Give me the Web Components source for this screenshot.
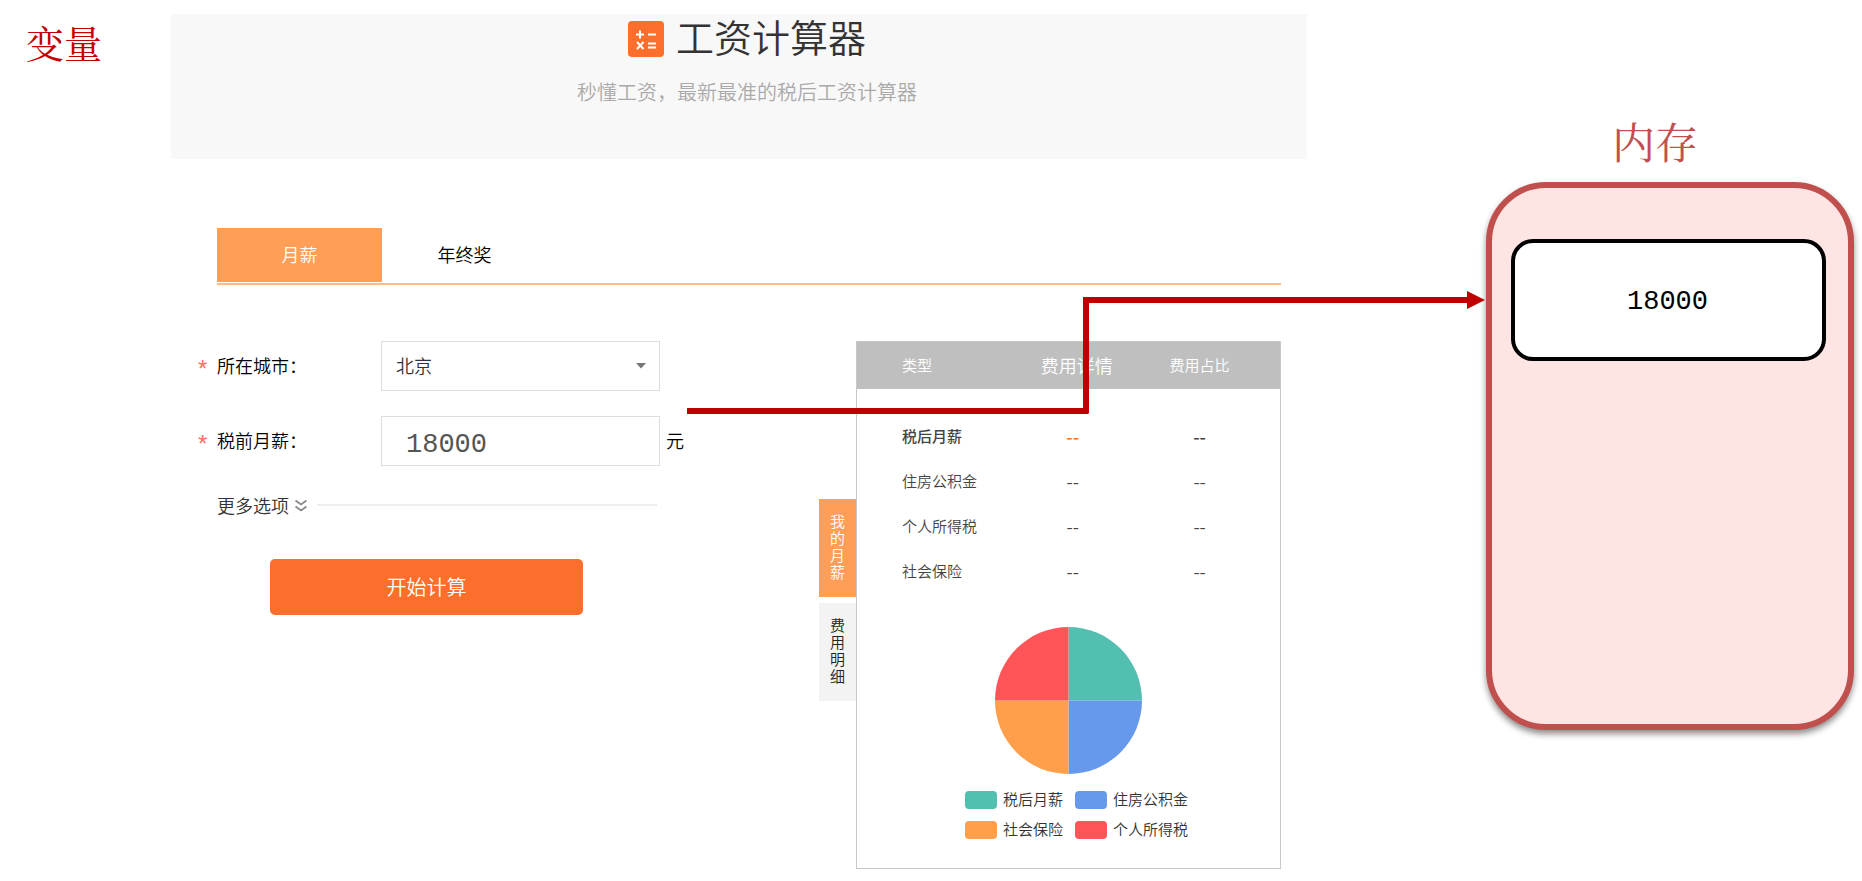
<!DOCTYPE html>
<html lang="zh-CN">
<head>
<meta charset="utf-8">
<title>变量 - 工资计算器</title>
<style>
body { margin: 0; background: #fff; color: #1a1a1a; font: 350 18px/24px "Noto Sans CJK SC", sans-serif; }
</style>
</head>
<body>
<lesson-slide>
  <slide-title slot="title">变量</slide-title>
  <salary-calculator slot="main"></salary-calculator>
  <memory-box slot="side" label="内存" value="18000"></memory-box>
  <flow-arrow slot="arrow"></flow-arrow>
</lesson-slide>

<script>
function define(name, html, setup) {
  const template = document.createElement('template');
  template.innerHTML = html;
  customElements.define(name, class extends HTMLElement {
    constructor() {
      super();
      this.attachShadow({ mode: 'open' }).append(template.content.cloneNode(true));
    }
    connectedCallback() {
      if (setup) setup(this, this.shadowRoot);
    }
  });
}

define('slide-title', `
<style>
:host { display: block; }
h1 { margin: 0; color: #c00000; font: 400 38px/48px "Noto Serif CJK SC", "Noto Sans CJK SC", serif; }
</style>
<h1><slot></slot></h1>`);

define('flow-arrow', `
<style>
:host { display: grid; grid-template-columns: 402fr 396fr; height: 117px; color: #c00000; pointer-events: none; }
.start { border: solid; border-width: 0 6px 6px 0; border-radius: 0 0 2px 0; }
.end { position: relative; border-top: 6px solid; margin: 0 16px 0 -6px; border-radius: 2px 0 0 0; }
svg { position: absolute; right: -16px; top: -12px; fill: currentColor; }
</style>
<div class="start"></div>
<div class="end"><svg width="18" height="18" viewBox="0 0 18 18"><path d="M0 0L18 9L0 18Z"/></svg></div>`);

define('memory-box', `
<style>
:host { display: block; }
h2 { margin: 0 0 14px; padding-right: 30px; text-align: center; color: #c0504d; font: 400 43px/54px "Noto Serif CJK SC", "Noto Sans CJK SC", serif; }
.memory { box-sizing: border-box; min-height: 548px; padding: 51px 22px 51px 19px; border: 6px solid #c0504d; border-radius: 60px; background: #ffe4e4; box-shadow: 0 4px 6px rgba(0,0,0,.45); }
.cell { display: flex; align-items: center; justify-content: center; box-sizing: border-box; height: 122px; padding: 4px 2px 0 0; border: 4px solid #000; border-radius: 22px; background: #fff; color: #000; font: 400 27px/32px "Liberation Mono", monospace; }
</style>
<h2></h2>
<div class="memory"><div class="cell"></div></div>`, (host, root) => {
  root.querySelector('h2').textContent = host.getAttribute('label');
  root.querySelector('.cell').textContent = host.getAttribute('value');
});

define('calc-header', `
<style>
:host { display: block; box-sizing: border-box; height: 145px; padding-left: 16px; background: #f8f8f8; text-align: center; }
.brand { display: flex; justify-content: center; align-items: center; gap: 12px; height: 50px; }
h2 { margin: 0; padding-bottom: 6px; color: #333; font-size: 38px; line-height: 44px; font-weight: 350; }
p { margin: 14px 0 0; color: #aaa; font-size: 20px; line-height: 28px; }
</style>
<div class="brand">
  <svg width="36" height="36" viewBox="0 0 36 36"><rect width="36" height="36" rx="4" fill="#fc6e2b"/><g fill="none" stroke="#fff" stroke-width="2"><path d="M8 13.500h8M12 9.500v8M20 13.500h8M20 22.500h8M20 26.500h8M9 21l6.500 7M15.500 21l-6.500 7"/></g></svg>
  <h2>工资计算器</h2>
</div>
<p>秒懂工资，最新最准的税后工资计算器</p>`);

define('calc-tabs', `
<style>
:host { display: block; border-bottom: 2px solid #ffb888; }
div { display: flex; padding-bottom: 1px; }
button { width: 165px; height: 54px; padding: 0 0 2px; border: 0; background: none; color: #000; font: inherit; }
button[aria-selected=true] { background: #ff9e57; color: #fff; }
</style>
<div role="tablist"><button role="tab" aria-selected="true">月薪</button><button role="tab" aria-selected="false">年终奖</button></div>`);

define('calc-form', `
<style>
:host { display: block; width: 493px; }
form { margin: 0; }
.row { display: flex; align-items: center; height: 50px; margin-bottom: 25px; color: #000; }
.mark { width: 19px; color: #f87060; font: 400 24px/24px "Liberation Sans", sans-serif; padding-top: 6px; box-sizing: border-box; }
label { width: 164px; padding-bottom: 2px; }
.field { position: relative; width: 279px; height: 50px; }
select, input { box-sizing: border-box; width: 100%; height: 100%; margin: 0; border: 1px solid #ddd; border-radius: 0; background: #fff; color: #333; outline: 0; }
select { appearance: none; padding: 0 14px 2px; font: inherit; }
input { padding: 8px 24px 0; color: #555; font: 400 27px/32px "Liberation Mono", monospace; }
.field svg { position: absolute; right: 14px; top: 22px; }
.unit { margin-left: 6px; padding-bottom: 2px; }
.more { display: flex; align-items: center; height: 28px; margin-left: 19px; padding-right: 34px; }
.more button { display: flex; align-items: center; gap: 6px; padding: 0; border: 0; background: none; color: #333; font: inherit; }
.more hr { flex: 1; margin: 0 0 0 10px; border: 0; border-top: 2px solid #eee; }
.submit { display: block; width: 313px; height: 56px; margin: 40px 0 0 72px; padding: 0; border: 0; border-radius: 5px; background: #fc6e2b; color: #fff; font: inherit; font-size: 20px; }
</style>
<form>
  <div class="row"><span class="mark">*</span><label for="city">所在城市：</label>
    <div class="field"><select id="city"><option>北京</option></select><svg width="10" height="6" viewBox="0 0 10 6"><path d="M0 0h10L5 5.500Z" fill="#777"/></svg></div></div>
  <div class="row"><span class="mark">*</span><label for="pay">税前月薪：</label>
    <div class="field"><input id="pay" type="text" value="18000"></div><span class="unit">元</span></div>
  <div class="more"><button type="button">更多选项<svg width="12" height="13" viewBox="0 0 12 13" fill="none" stroke="#888" stroke-width="1.800"><path d="M.5 1.500L6 5.500L11.500 1.500M.5 7.500L6 11.500L11.500 7.500"/></svg></button><hr></div>
  <button class="submit" type="button">开始计算</button>
</form>`);

define('side-tabs', `
<style>
:host { display: flex; flex-direction: column; gap: 6px; }
button { display: flex; justify-content: center; box-sizing: border-box; width: 37px; height: 98px; padding: 13px 0 0; border: 0; background: #f3f3f3; color: #222; font: inherit; font-size: 15px; line-height: 17px; }
button[aria-selected=true] { background: #ff9e57; color: #fff; }
span { width: 15px; word-break: break-all; }
</style>
<button aria-selected="true" role="tab"><span>我的月薪</span></button>
<button aria-selected="false" role="tab"><span>费用明细</span></button>`);

define('fee-table', `
<style>
:host { display: block; }
table { width: 100%; border-collapse: collapse; table-layout: fixed; font-size: 15px; }
.type { width: 36%; } .fee { width: 30%; }
th, td { padding: 0; text-align: center; font-weight: 350; }
td:nth-child(n+2) { font-size: 18px; }
th:first-child, td:first-child { padding-left: 45px; text-align: left; }
thead th { height: 45px; padding-bottom: 2px; background: #bfbfbf; color: #fff; }
thead th:nth-child(2) { font-size: 18px; padding-left: 8px; }
tbody::before { content: ""; display: block; height: 24px; }
tbody tr { height: 45px; color: #444; }
tbody .net td { font-weight: 500; }
.net td:nth-child(2) { color: #fc6e2b; }
</style>
<table>
<colgroup><col class="type"><col class="fee"><col class="fee"><col></colgroup>
<thead><tr><th>类型</th><th>费用详情</th><th>费用占比</th><th></th></tr></thead>
<tbody>
<tr class="net"><td>税后月薪</td><td>--</td><td>--</td><td></td></tr>
<tr><td>住房公积金</td><td>--</td><td>--</td><td></td></tr>
<tr><td>个人所得税</td><td>--</td><td>--</td><td></td></tr>
<tr><td>社会保险</td><td>--</td><td>--</td><td></td></tr>
</tbody></table>`);

define('pie-chart', `
<style>
:host { display: flex; flex-direction: column; align-items: center; padding: 34px 0 26px; }
ul { display: grid; grid-template-columns: auto auto; gap: 6px 12px; list-style: none; margin: 14px 0 0; padding: 0 0 0 16px; color: #333; font-size: 15px; }
li { display: flex; align-items: center; gap: 6px; height: 24px; }
span { padding-bottom: 2px; }
i { width: 32px; height: 18px; border-radius: 4px; }
</style>
<svg width="147" height="147" viewBox="0 0 147 147"><path fill="#53bfb0" d="M73.500 73.500V0A73.500 73.500 0 0 1 147 73.500Z"/><path fill="#6699ec" d="M73.500 73.500H147A73.500 73.500 0 0 1 73.500 147Z"/><path fill="#ff9e4b" d="M73.500 73.500V147A73.500 73.500 0 0 1 0 73.500Z"/><path fill="#ff5559" d="M73.500 73.500H0A73.500 73.500 0 0 1 73.500 0Z"/></svg>
<ul>
<li><i style="background:#53bfb0"></i><span>税后月薪</span></li><li><i style="background:#6699ec"></i><span>住房公积金</span></li>
<li><i style="background:#ff9e4b"></i><span>社会保险</span></li><li><i style="background:#ff5559"></i><span>个人所得税</span></li>
</ul>`);

define('result-panel', `
<style>
:host { display: flex; align-items: flex-start; }
side-tabs { padding-top: 158px; }
.panel { box-sizing: border-box; width: 425px; border: 1px solid #c8c8c8; }
</style>
<side-tabs></side-tabs>
<div class="panel"><fee-table></fee-table><pie-chart></pie-chart></div>`);

define('salary-calculator', `
<style>
:host { display: block; }
calc-tabs { margin: 69px 26px 0 46px; }
.body { display: flex; justify-content: space-between; padding: 56px 26px 0 27px; }
</style>
<calc-header></calc-header>
<calc-tabs></calc-tabs>
<div class="body"><calc-form></calc-form><result-panel></result-panel></div>`);

define('lesson-slide', `
<style>
:host { position: relative; display: grid; grid-template-columns: 145px minmax(0, 1fr) 368px; padding: 14px 8px 12px 26px; }
::slotted([slot=title]) { padding-top: 4px; }
::slotted([slot=main]) { margin-right: 179px; }
::slotted([slot=side]) { padding-top: 100px; }
::slotted([slot=arrow]) { position: absolute; top: 297px; left: 687px; right: 377px; }
</style>
<slot name="title"></slot><slot name="main"></slot><slot name="side"></slot><slot name="arrow"></slot>`);
</script>
</body>
</html>
